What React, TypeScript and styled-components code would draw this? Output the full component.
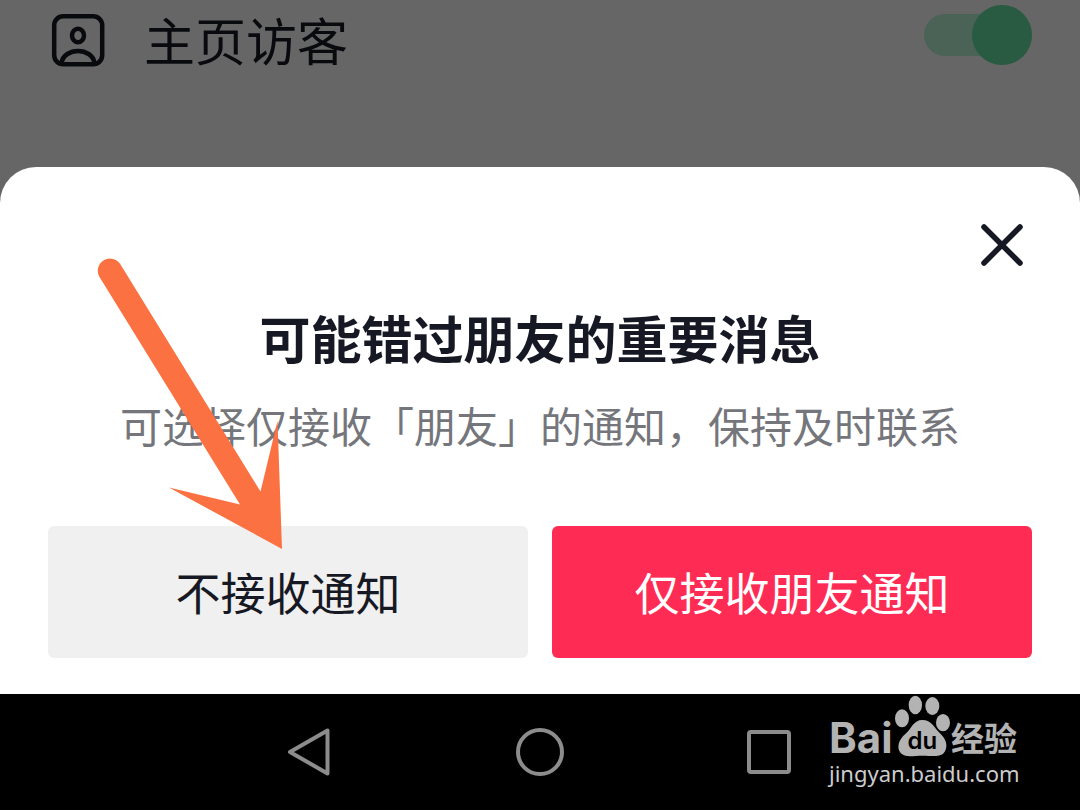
import React, { useState } from "react";
import styled, { createGlobalStyle } from "styled-components";

const GlobalStyle = createGlobalStyle`
  * { box-sizing: border-box; }
  body {
    margin: 0;
    background: #666;
    color: #161823;
    font-family: "Noto Sans CJK SC", sans-serif;
  }
  button { border: 0; padding: 0; background: none; font: inherit; color: inherit; cursor: pointer; }
`;

const Page = styled.div`
  display: flex;
  flex-direction: column;
  min-height: 100vh;
  background: #666;
`;

const SettingRow = styled.div`
  flex: 1;
  display: flex;
  align-items: flex-start;
  min-height: 167px;
  padding: 5px 48px 0;
`;

const SettingLabel = styled.label`
  flex: 1;
  display: flex;
  align-items: flex-start;
  gap: 36px;
  color: #090a0e;
  font-size: 51px;
  line-height: 68px;

  svg {
    margin-top: 6px;
  }
`;

const Switch = styled.input`
  appearance: none;
  position: relative;
  display: flex;
  align-items: center;
  justify-content: flex-end;
  width: 108px;
  height: 60px;
  margin: 0;

  &::before {
    content: "";
    width: 108px;
    height: 42px;
    border-radius: 21px;
    background: #4a6356;
  }

  &::after {
    content: "";
    position: absolute;
    top: 0;
    right: 0;
    width: 60px;
    height: 60px;
    border-radius: 50%;
    background: #295b42;
  }

  &:not(:checked)::after {
    right: 48px;
  }
`;

const Sheet = styled.section`
  position: relative;
  display: flex;
  flex-direction: column;
  padding: 48px 48px 36px;
  border-radius: 36px 36px 0 0;
  background: #fff;
`;

const CloseButton = styled.button`
  align-self: flex-end;
  width: 60px;
  height: 60px;
`;

const Title = styled.h1`
  margin: 24px 0 0;
  font-size: 51px;
  font-weight: 700;
  line-height: 76px;
  text-align: center;
`;

const Description = styled.p`
  margin: 18px 0 0;
  color: #75767c;
  font-size: 42px;
  line-height: 64px;
  text-align: center;
`;

const Actions = styled.div`
  display: grid;
  grid-template-columns: 1fr 1fr;
  gap: 24px;
  margin-top: 69px;
`;

const ActionButton = styled.button<{ $primary?: boolean }>`
  && {
    height: 132px;
    border-radius: 6px;
    background: ${(p) => (p.$primary ? "#fe2c55" : "#f0f0f0")};
    color: ${(p) => (p.$primary ? "#fff" : "#161823")};
    font-size: 45px;
    line-height: 66px;
  }
`;

const Arrow = styled.svg`
  position: absolute;
  top: 90px;
  left: 96px;
  pointer-events: none;
`;

const NavBar = styled.nav`
  position: relative;
  display: flex;
  justify-content: center;
  gap: 170px;
  height: 116px;
  padding-top: 28px;
  background: #000;
`;

const NavButton = styled.button`
  width: 60px;
  height: 60px;
`;

const Watermark = styled.div`
  position: absolute;
  top: 0;
  right: 56px;
  width: 195px;
  color: #b3b3b3;
`;

const Brand = styled.div`
  display: flex;
  height: 64px;
  align-items: flex-end;
  font-weight: 700;
`;

const BrandLatin = styled.span`
  width: 64px;
  font-family: Inter, sans-serif;
  font-size: 42px;
  line-height: 40px;
`;

const BrandChinese = styled.span`
  font-size: 33px;
  line-height: 42px;
`;

const Site = styled.div`
  color: #ccc;
  font-family: "Noto Sans", sans-serif;
  font-size: 22px;
  font-weight: 400;
  line-height: 30px;
`;

export default function App() {
  const [visible, setVisible] = useState(true);
  return (
    <>
      <GlobalStyle />
      <Page>
        <SettingRow>
          <SettingLabel htmlFor="visitors">
            <svg width="60" height="60" viewBox="0 1 60 60" fill="none" stroke="currentColor" strokeWidth="4.5" aria-hidden="true">
              <rect x="6.2" y="6.2" width="48" height="48" rx="9" />
              <ellipse cx="30" cy="25.500" rx="6" ry="6.700" />
              <path d="M13.500 53C16 37 44 37 46.500 53" />
            </svg>
            主页访客
          </SettingLabel>
          <Switch id="visitors" type="checkbox" checked={visible} onChange={(e) => setVisible(e.target.checked)} />
        </SettingRow>

        <Sheet role="dialog" aria-labelledby="sheet-title">
          <CloseButton aria-label="关闭">
            <svg width="60" height="60" viewBox="0 0 60 60" fill="none" stroke="#161823" strokeWidth="5.5" strokeLinecap="round">
              <path d="M12 12L48 48M48 12L12 48" />
            </svg>
          </CloseButton>
          <Title id="sheet-title">可能错过朋友的重要消息</Title>
          <Description>可选择仅接收「朋友」的通知，保持及时联系</Description>
          <Actions>
            <ActionButton>不接收通知</ActionButton>
            <ActionButton $primary>仅接收朋友通知</ActionButton>
          </Actions>
          <Arrow width="190" height="294" viewBox="0 0 190 294" fill="#fb7142" aria-hidden="true">
            <path d="M3.500 20A12 12 0 0 1 24.500 7.500L164.500 234.500L181.500 164L186 292L73 230.500L144 247.500Z" />
          </Arrow>
        </Sheet>

        <NavBar>
          <NavButton aria-label="返回">
            <svg width="60" height="60" viewBox="0 0 60 60" fill="none" stroke="#8c8c8c" strokeWidth="4" strokeLinejoin="round">
              <path d="M10 30L47.500 8.500V51.500Z" />
            </svg>
          </NavButton>
          <NavButton aria-label="主屏幕">
            <svg width="60" height="60" viewBox="0 0 60 60" fill="none" stroke="#8c8c8c" strokeWidth="4">
              <circle cx="30" cy="30" r="22" />
            </svg>
          </NavButton>
          <NavButton aria-label="最近任务">
            <svg width="60" height="60" viewBox="0 0 60 60" fill="none" stroke="#8c8c8c" strokeWidth="4">
              <rect x="9" y="10" width="40" height="40" rx="2" />
            </svg>
          </NavButton>
          <Watermark>
            <Brand>
              <BrandLatin>Bai</BrandLatin>
              <svg width="58" height="64" viewBox="489 27 174 192" fill="currentColor" role="img" aria-label="du">
                <ellipse cx="516" cy="100" rx="21" ry="27" />
                <ellipse cx="556" cy="60" rx="20" ry="28" />
                <ellipse cx="607" cy="63" rx="21" ry="27" />
                <ellipse cx="639" cy="113" rx="21" ry="26" />
                <path d="M577 105C605 105 612 128 632 147C648 163 654 180 645 199C634 219 609 212 578 212C547 212 526 219 512 204C498 187 507 163 526 147C546 130 550 105 577 105Z" />
                <text x="577" y="193" textAnchor="middle" fill="#000" fontFamily="Inter, sans-serif" fontSize="72" fontWeight="600">du</text>
              </svg>
              <BrandChinese>经验</BrandChinese>
            </Brand>
            <Site>jingyan.baidu.com</Site>
          </Watermark>
        </NavBar>
      </Page>
    </>
  );
}
